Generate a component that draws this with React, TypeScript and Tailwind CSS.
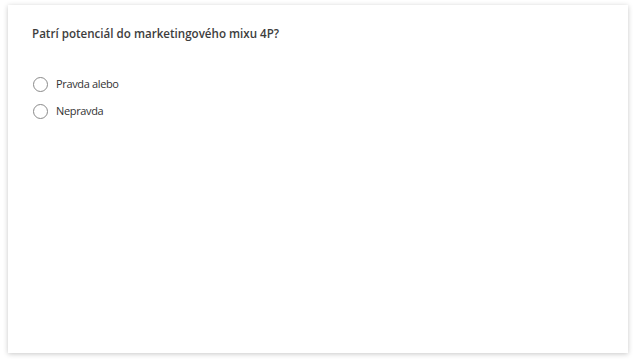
import React from "react";

export default function App() {
  const options = ["Pravda alebo", "Nepravda"];
  return (
    <div className="w-[636px] h-[364px] bg-white pt-[5px] pl-[8px]" style={{ fontFamily: '"Open Sans", sans-serif' }}>
      <div className="w-[620px] h-[348px] bg-white shadow-[0_1px_5px_rgba(0,0,0,0.22)] px-[24px] pt-[20px]">
        <div className="text-[11.6px] font-semibold text-[#3d3d3d] leading-[18px]">Patrí potenciál do marketingového mixu 4P?</div>
        <div className="mt-[32px] flex flex-col gap-[9px]">
          {options.map((o) => (
            <label key={o} className="flex items-center gap-[8px] h-[18px]">
              <span className="w-[15px] h-[15px] ml-[1px] rounded-full border border-[#8a8a8a] bg-white" />
              <span className="text-[11px] tracking-[-0.35px] text-[#333] leading-[18px]">{o}</span>
            </label>
          ))}
        </div>
      </div>
    </div>
  );
}
